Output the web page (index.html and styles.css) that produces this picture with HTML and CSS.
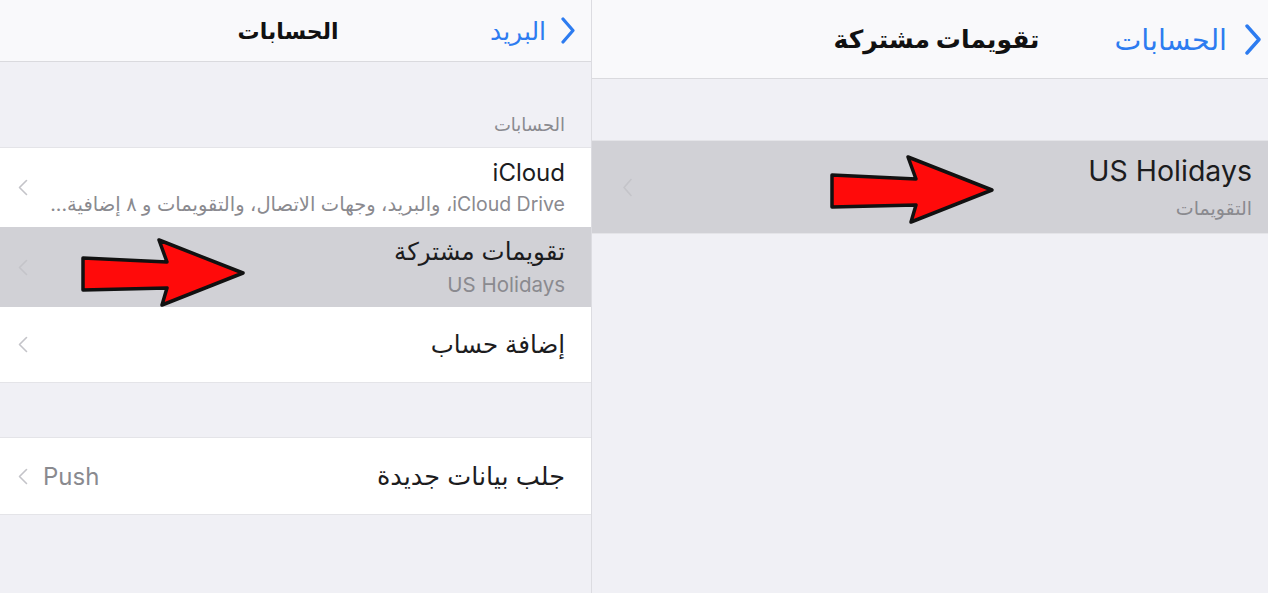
FILE: index.html
```html
<!DOCTYPE html>
<html lang="ar">
<head>
<meta charset="utf-8">
<title>الحسابات</title>
<link rel="stylesheet" href="styles.css">
</head>
<body>
<div class="screen">
  <section class="panel panel-left" dir="rtl">
    <header class="nav">
      <a class="back">
        <svg class="back-chev" viewBox="0 0 16 27" width="16" height="27"><path d="M3 2 L13 13.5 L3 25" fill="none" stroke="currentColor" stroke-width="3.2" stroke-linecap="round" stroke-linejoin="round"/></svg>
        <span>البريد</span>
      </a>
      <h1 class="nav-title">الحسابات</h1>
      <span></span>
    </header>
    <div class="section-label">الحسابات</div>
    <ul class="group">
      <li class="row row-icloud">
        <div class="cell-text">
          <div class="cell-title latin">iCloud</div>
          <div class="cell-sub">iCloud Drive، والبريد، وجهات الاتصال، والتقويمات و ٨ إضافية...</div>
        </div>
        <svg class="chev" viewBox="0 0 10 17" width="10" height="17"><path d="M8.5 1.5 L1.5 8.5 L8.5 15.5" fill="none" stroke="currentColor" stroke-width="1.6" stroke-linecap="round" stroke-linejoin="round"/></svg>
      </li>
      <li class="row row-shared selected">
        <div class="cell-text">
          <div class="cell-title">تقويمات مشتركة</div>
          <div class="cell-sub latin">US Holidays</div>
        </div>
        <svg class="chev" viewBox="0 0 10 17" width="10" height="17"><path d="M8.5 1.5 L1.5 8.5 L8.5 15.5" fill="none" stroke="currentColor" stroke-width="1.6" stroke-linecap="round" stroke-linejoin="round"/></svg>
      </li>
      <li class="row row-add">
        <div class="cell-title">إضافة حساب</div>
        <svg class="chev" viewBox="0 0 10 17" width="10" height="17"><path d="M8.5 1.5 L1.5 8.5 L8.5 15.5" fill="none" stroke="currentColor" stroke-width="1.6" stroke-linecap="round" stroke-linejoin="round"/></svg>
      </li>
    </ul>
    <div class="group-gap"></div>
    <ul class="group">
      <li class="row row-fetch">
        <div class="cell-title title-fetch">جلب بيانات جديدة</div>
        <span class="cell-value latin">Push</span>
        <svg class="chev chev-value" viewBox="0 0 10 17" width="10" height="17"><path d="M8.5 1.5 L1.5 8.5 L8.5 15.5" fill="none" stroke="currentColor" stroke-width="1.6" stroke-linecap="round" stroke-linejoin="round"/></svg>
      </li>
    </ul>
    <svg class="pointer pointer-left" viewBox="0 0 170 76" width="170" height="76"><polygon points="5,24 89,28 81,6 165,39 84,71 89,54 5,56" fill="#ff0a0a" stroke="#111" stroke-width="3.5" stroke-linejoin="round"/></svg>
  </section>

  <section class="panel panel-right" dir="rtl">
    <header class="nav nav-large">
      <a class="back">
        <svg class="back-chev" viewBox="0 0 20 31" width="20" height="31"><path d="M4 2 L16 15.5 L4 29" fill="none" stroke="currentColor" stroke-width="3.4" stroke-linecap="round" stroke-linejoin="round"/></svg>
        <span>الحسابات</span>
      </a>
      <h1 class="nav-title">تقويمات مشتركة</h1>
      <span></span>
    </header>
    <div class="top-gap"></div>
    <ul class="group">
      <li class="row row-holiday selected">
        <div class="cell-text">
          <div class="cell-title latin">US Holidays</div>
          <div class="cell-sub">التقويمات</div>
        </div>
        <svg class="chev" viewBox="0 0 10 19" width="11" height="19"><path d="M8.5 1.5 L1.5 9.5 L8.5 17.5" fill="none" stroke="currentColor" stroke-width="1.6" stroke-linecap="round" stroke-linejoin="round"/></svg>
      </li>
    </ul>
    <svg class="pointer pointer-right" viewBox="0 0 170 76" width="170" height="76"><polygon points="5,24 89,28 81,6 165,39 84,71 89,54 5,56" fill="#ff0a0a" stroke="#111" stroke-width="3.5" stroke-linejoin="round"/></svg>
  </section>
</div>
</body>
</html>
```

FILE: styles.css
```css
* { box-sizing: border-box; }

html, body {
  margin: 0;
  padding: 0;
  background: #efeff4;
}

body {
  font-family: Inter, "DejaVu Sans", sans-serif;
  color: #1c1c1e;
}

.screen {
  display: flex;
  direction: ltr;
  width: 1268px;
  height: 593px;
  overflow: hidden;
}

.panel {
  position: relative;
  background: #f0f0f5;
  height: 100%;
}

.panel-left {
  width: 591px;
  flex: none;
}

.panel-right {
  flex: 1;
  border-left: 1px solid #dcdce1;
}

/* navigation bar */
.nav {
  display: grid;
  grid-template-columns: 1fr auto 1fr;
  align-items: center;
  height: 62px;
  padding: 0 15px 0 0;
  background: #f9f9fb;
  border-bottom: 1px solid #dadade;
}

.nav-large {
  height: 79px;
  padding-right: 5px;
}

.back {
  display: flex;
  align-items: center;
  gap: 14px;
  color: #2d7cf0;
  font-size: 25px;
  justify-self: start;
}

.nav-large .back {
  font-size: 28.5px;
  gap: 16px;
}

.back-chev { display: block; }

.nav-title {
  margin: 0;
  font-size: 22px;
  font-weight: bold;
  color: #111;
  position: relative;
  left: 0;
}

.nav-large .nav-title {
  font-size: 25px;
  left: 9px;
}

/* sections */
.section-label {
  padding: 52px 26px 8px 0;
  font-size: 18px;
  color: #8a8a8f;
  height: 85px;
}

.group {
  list-style: none;
  margin: 0;
  padding: 0;
  background: #fff;
  border-top: 1px solid #e4e4e8;
  border-bottom: 1px solid #e4e4e8;
}

.group-gap { height: 54px; }
.top-gap { height: 61px; }

.row {
  display: flex;
  align-items: center;
  padding: 0 26px 0 18px;
  color: #1c1c1e;
}

.row.selected { background: #d1d1d6; }

.cell-text {
  display: flex;
  flex-direction: column;
}

.cell-title {
  font-size: 24.5px;
  line-height: 1.2;
}

.cell-title.latin { font-size: 24px; }

.title-fetch { font-size: 25.5px; }

.cell-sub {
  font-size: 19.5px;
  color: #8a8a8f;
  margin-top: 5px;
}

.cell-sub.latin { font-size: 20.5px; }

.chev {
  margin-inline-start: auto;
  color: #c4c4c9;
  flex: none;
}

.chev-value { margin-inline-start: 15px; }

.cell-value {
  margin-inline-start: auto;
  color: #8a8a8f;
  font-size: 24px;
}

.row-icloud { height: 79px; }
.row-shared { height: 80px; }
.row-add { height: 75px; }
.row-fetch { height: 76px; }

.row-holiday {
  height: 92px;
  padding: 0 16px 0 30px;
}

.row-holiday .cell-title.latin { font-size: 28.5px; }
.row-holiday .cell-sub { font-size: 19px; margin-top: 8px; }

/* annotation arrows */
.pointer {
  position: absolute;
  direction: ltr;
}

.pointer-left { left: 78px; top: 234px; }
.pointer-right { left: 235px; top: 151px; }
```
